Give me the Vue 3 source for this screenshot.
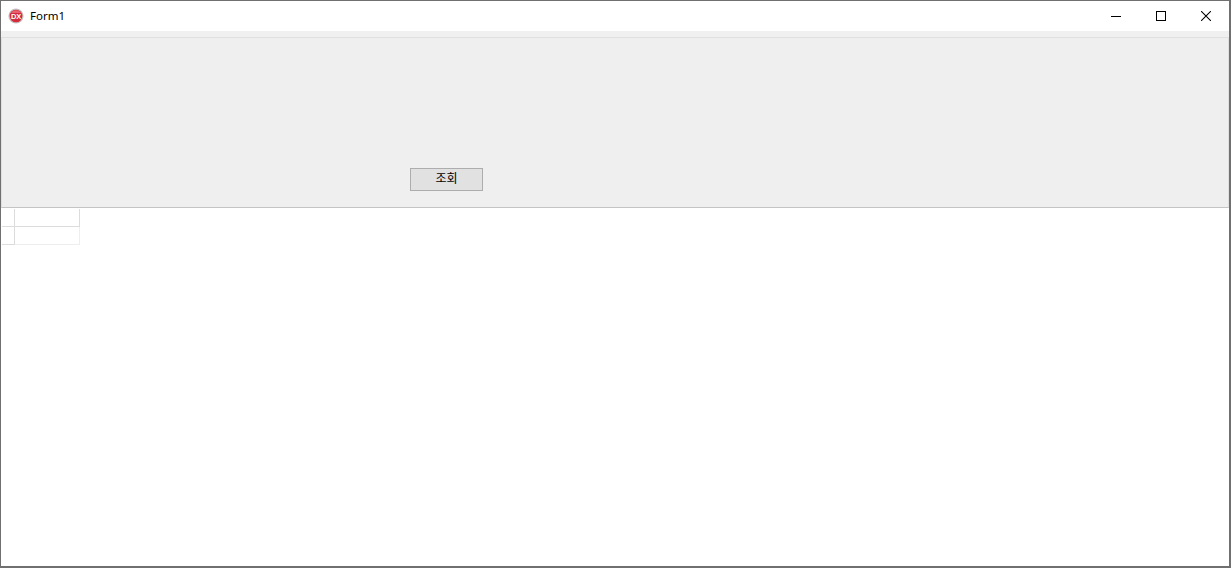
<script setup>
const rows = [1, 2]
</script>

<template>
  <div class="window">
    <div class="titlebar">
      <svg class="app-icon" width="16" height="16" viewBox="0 0 16 16">
        <circle cx="8" cy="8" r="7.6" fill="#c4bfc0" />
        <circle cx="8" cy="8" r="6.3" fill="#d42a3c" />
        <path d="M3 5 a6 6 0 0 1 10 0 z" fill="#e8606f" />
        <text x="8" y="10.7" class="dx">DX</text>
      </svg>
      <span class="title">Form1</span>
      <div class="controls">
        <div class="ctl">
          <svg width="10" height="10" viewBox="0 0 10 10"><path d="M0 5.5H10" stroke="#000" fill="none" /></svg>
        </div>
        <div class="ctl">
          <svg width="10" height="10" viewBox="0 0 10 10"><rect x="0.5" y="0.5" width="9" height="9" stroke="#000" fill="none" /></svg>
        </div>
        <div class="ctl">
          <svg width="10" height="10" viewBox="0 0 10 10"><path d="M0 0L10 10M10 0L0 10" stroke="#000" stroke-width="1.05" fill="none" /></svg>
        </div>
      </div>
    </div>
    <div class="strip"></div>
    <div class="panel">
      <button class="search">조회</button>
    </div>
    <div class="content">
      <div class="grid">
        <template v-for="r in rows" :key="r">
          <div class="cell fixed" :class="{ last: r === 2 }"></div>
          <div class="cell" :class="{ last: r === 2 }"></div>
        </template>
      </div>
    </div>
  </div>
</template>

<style scoped>
.window {
  width: 1231px;
  height: 568px;
  box-sizing: border-box;
  border: 1px solid #707070;
  border-bottom-width: 2px;
  border-right-width: 2px;
  display: flex;
  flex-direction: column;
  background: #fff;
  font-family: "Noto Sans CJK KR", "Liberation Sans", sans-serif;
  overflow: hidden;
}

.titlebar {
  height: 30px;
  display: flex;
  align-items: center;
  background: #fff;
  padding: 0 1px 0 7px;
  flex: none;
}

.app-icon {
  flex: none;
}

.dx {
  font-family: "Liberation Sans", sans-serif;
  font-size: 7.5px;
  font-weight: 700;
  fill: #fff;
  text-anchor: middle;
  letter-spacing: -0.2px;
}

.title {
  margin-left: 6px;
  font-family: "Noto Sans", "Liberation Sans", sans-serif;
  font-size: 11.5px;
  color: #000;
  position: relative;
  top: -0.5px;
}

.controls {
  margin-left: auto;
  display: flex;
}

.ctl {
  width: 45px;
  height: 30px;
  display: flex;
  align-items: center;
  justify-content: center;
}

.strip {
  height: 6px;
  background: #f0f0f0;
  flex: none;
}

.panel {
  height: 171px;
  box-sizing: border-box;
  flex: none;
  background: #efefef;
  border: 1px solid #e0e0e0;
  border-bottom-color: #c4c4c4;
  display: flex;
  align-items: flex-end;
  padding: 0 0 16px 408px;
}

.search {
  width: 73px;
  height: 23px;
  padding: 0 0 5px;
  border: 1px solid #adadad;
  background: #e1e1e1;
  font-family: "Noto Sans CJK KR", sans-serif;
  font-size: 12px;
  color: #000;
}

.content {
  flex: 1;
  background: #fff;
  padding: 1px 0 0 1px;
}

.grid {
  display: grid;
  grid-template-columns: 13px 65px;
  grid-auto-rows: 18px;
  width: 78px;
}

.cell {
  border-right: 1px solid #dcdcdc;
  border-bottom: 1px solid #dcdcdc;
}

.cell.last {
  border-color: #eeeeee;
}

.cell.fixed.last {
  border-right-color: #dcdcdc;
  border-bottom-color: #dcdcdc;
}
</style>
